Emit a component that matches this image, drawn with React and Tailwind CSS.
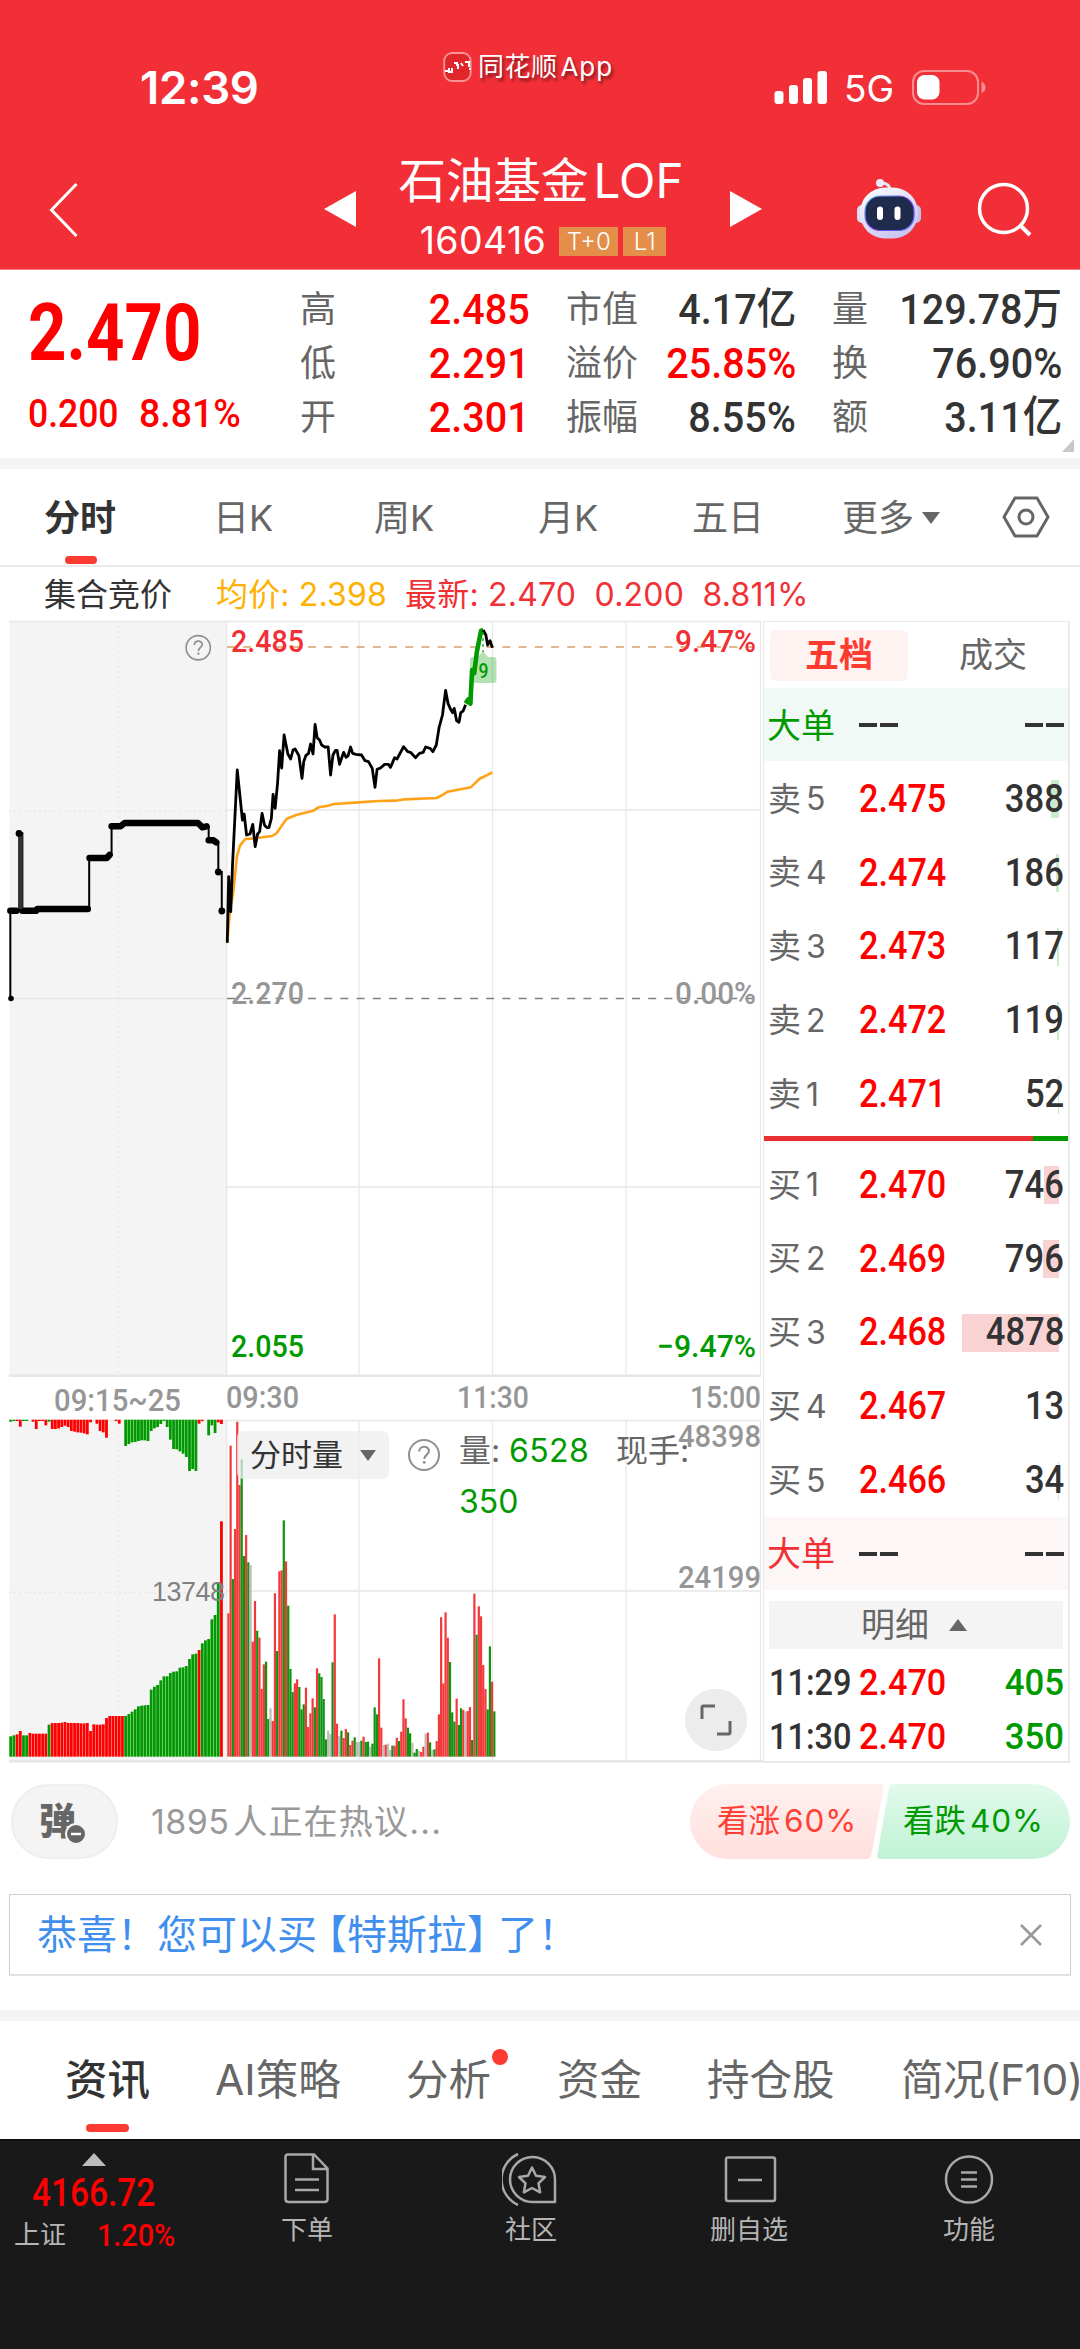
import React from "react";

const stats = [
  [
    { label: "高", value: "2.485", up: true },
    { label: "低", value: "2.291", up: true },
    { label: "开", value: "2.301", up: true },
  ],
  [
    { label: "市值", value: "4.17", unit: "亿" },
    { label: "溢价", value: "25.85%", up: true },
    { label: "振幅", value: "8.55%" },
  ],
  [
    { label: "量", value: "129.78", unit: "万" },
    { label: "换", value: "76.90%" },
    { label: "额", value: "3.11", unit: "亿" },
  ],
];

const sells = [
  { level: 5, price: "2.475", amount: 388, bar: 8 },
  { level: 4, price: "2.474", amount: 186, bar: 3 },
  { level: 3, price: "2.473", amount: 117, bar: 2 },
  { level: 2, price: "2.472", amount: 119, bar: 2 },
  { level: 1, price: "2.471", amount: 52, bar: 1 },
];

const buys = [
  { level: 1, price: "2.470", amount: 746, bar: 15 },
  { level: 2, price: "2.469", amount: 796, bar: 16 },
  { level: 3, price: "2.468", amount: 4878, bar: 97 },
  { level: 4, price: "2.467", amount: 13, bar: 0 },
  { level: 5, price: "2.466", amount: 34, bar: 1 },
];

const deals = [
  { time: "11:29", price: "2.470", amount: 405 },
  { time: "11:30", price: "2.470", amount: 350 },
];

// Series are stored in plot units, see toPoints()
const priceLine =
  "660,998 664,800 670,905 675,770 689,480 697,560 704,630 709,612 716,675 726,672 734,643 741,710 748,672 754,665 761,610 768,645 774,652 781,653 788,625 793,553 799,595 806,520 812,422 818,474 825,375 836,432 844,447 851,420 857,417 868,437 877,505 882,455 888,437 896,430 902,402 909,432 915,343 921,383 928,390 934,405 943,411 953,411 960,495 967,435 974,421 979,421 986,463 998,427 1005,442 1011,437 1018,411 1024,430 1034,433 1050,435 1060,452 1070,455 1081,475 1089,532 1095,478 1105,474 1117,463 1128,463 1134,472 1146,443 1153,447 1172,410 1184,425 1192,427 1207,443 1218,430 1229,427 1236,411 1249,415 1257,425 1267,405 1275,353 1285,315 1294,241 1301,280 1308,297 1314,308 1319,295 1326,332 1333,337 1338,308 1345,303 1352,284";
const peakLine = "1352,280 1360,268 1366,281 1371,180 1377,190 1385,125 1397,62 1403,60";
const tailLine = "1403,60 1411,75 1416,105 1423,92 1430,113";
const avgLine =
  "660,998 668,900 677,850 688,740 697,707 712,687 740,685 790,678 803,670 832,627 860,615 910,602 925,592 950,588 970,582 1040,577 1100,573 1150,572 1175,568 1268,564 1285,555 1300,545 1367,532 1392,507 1430,487";
const auctionLine =
  "30,1165 30,902 56,902 56,670 65,670 65,902 105,902 108,897 259,897 259,744 310,744 318,735 324,735 324,649 350,649 362,639 575,639 588,652 600,649 606,652 606,691 628,696 634,698 634,786 644,786 644,903";
const auctionDots = [
  "30,902 48,902",
  "65,902 105,902 108,897 255,897",
  "260,744 310,744 318,735",
  "324,649 350,649 362,639 575,639 588,652 600,649",
  "606,691 620,691 628,697",
];

const toPoints = (line) =>
  line
    .split(" ")
    .map((pair) => {
      const [x, y] = pair.split(",").map(Number);
      return `${(x / 2.904).toFixed(2)},${(610 + y / 3).toFixed(2)}`;
    })
    .join(" ");

// r = up, g = down, n = unchanged
const volumes =
  "r880 r377 g777 r627 r305 r495 g418 g708 r645 g727 n735 r965 r843 g932 r953 r1107 r1033 g1025 g1197 n1165 r1203 r820 g993 r754 r751 g601 r724 g857 g1047 g1116 r1090 r1078 g1101 g1168 g1153 r1103 r1221 r1180 r1135 g1162 r1045 g1060 g1071 g1137 g1258 n1232 n1242 g1027 r883 r1211 n1248 g1232 r1254 r1227 g1237 r1275 r1262 g1252 n1266 n1266 g1262 r1250 g1266 g1265 n1280 g1271 g1162 g1183 r1015 r1223 n1275 r1274 n1271 n1290 g1277 r1277 r1253 g1263 r1235 r1138 r1195 g1223 g1240 n1268 g1298 g1287 n1292 r1296 r1280 n1241 r1238 g1267 n1290 g1288 r1263 r1183 r892 r1090 r877 r953 g1026 g1177 g1205 r1136 g1215 g1165 r1170 n1175 r1173 r1161 g1260 r821 g944 r859 r889 r1035 r1107 g1168 g979 r1085 g1174".split(" ");

const auctionMatched =
  "g1249 g1246 r1243 r1233 g1246 g1246 r1239 r1241 r1241 r1241 r1241 r1241 g1214 r1209 r1209 r1209 r1208 r1206 r1209 r1209 r1209 r1209 r1210 r1210 r1209 r1233 r1213 r1214 r1214 r1213 r1194 r1188 r1188 r1188 r1188 r1188 g1188 g1182 g1175 g1168 g1159 g1157 g1156 g1155 g1109 g1100 g1095 g1081 g1069 g1069 g1059 g1055 g1054 g1043 g1042 g1038 g1017 g1003 g1001 r990 g970 g961 g957 g898 g885 g788 r604".split(" ");

const auctionUnmatched =
  "g305 g303 r303 r320 g303 g303 n299 r305 r327 r303 r303 r316 g305 r327 r327 r325 r321 r317 r321 r333 r335 r337 r338 r340 r343 r307 n299 r311 r333 r337 r353 n299 n299 r303 r311 n299 g378 g372 g367 g366 g363 g361 g361 g363 g333 g325 g321 g312 g303 g321 g359 g387 g388 g394 g401 g411 g453 g447 g453 r311 r303 n299 g346 g316 g339 r307 r312".split(" ");

const barColor = { r: "#ff0000", g: "#009a00", n: "#bbbbbb" };
const softColor = { r: "#f23a3c", g: "#109410", n: "#bcbcbc" };

const ChartText = ({ x, y, width, size = 31, fill = "#969696", weight = 500, children }) => (
  <text
    x={x}
    y={y}
    textLength={width}
    lengthAdjust="spacingAndGlyphs"
    fontSize={size}
    fontWeight={weight}
    fill={fill}
    className="font-['Roboto','Noto_Sans_CJK_SC',sans-serif]"
  >
    {children}
  </text>
);

const HelpIcon = ({ className }) => (
  <svg viewBox="0 0 34 34" className={className}>
    <circle cx="17" cy="17" r="15" fill="none" stroke="#8f8f8f" strokeWidth="2" />
    <path d="M12.2 13.6c0-6.4 9.8-6.2 9.8-.6 0 3.4-4.8 3.9-4.8 8" fill="none" stroke="#8f8f8f" strokeWidth="2.1" />
    <circle cx="17.2" cy="24.4" r="1.4" fill="#8f8f8f" />
  </svg>
);

const Robot = () => (
  <svg viewBox="0 0 66 62" className="h-[62px] w-[66px]">
    <defs>
      <linearGradient id="shell" x1="0" y1="0" x2="0.6" y2="1">
        <stop offset="0" stopColor="#ffffff" />
        <stop offset="1" stopColor="#c9c6f2" />
      </linearGradient>
      <linearGradient id="rim" x1="0" y1="0" x2="1" y2="1">
        <stop offset="0" stopColor="#58d6f0" />
        <stop offset="0.5" stopColor="#8a3cf0" />
        <stop offset="1" stopColor="#4f6bf5" />
      </linearGradient>
    </defs>
    <path d="M34 12c0-4-3-7-9-7" fill="none" stroke="#e6e6fb" strokeWidth="3" />
    <circle cx="24" cy="5" r="4" fill="#eceaff" />
    <rect x="1" y="27" width="10" height="18" rx="5" fill="#dcdcfa" />
    <rect x="55" y="27" width="10" height="18" rx="5" fill="#c3c0f0" />
    <rect x="4" y="9.500" width="58" height="51" rx="25" fill="url(#shell)" />
    <rect x="9" y="18" width="49" height="34.500" rx="15" fill="#1f2b4d" stroke="url(#rim)" strokeWidth="1.200" />
    <rect x="21" y="28.500" width="6" height="13.500" rx="3" fill="#fff" />
    <rect x="38.500" y="28.500" width="6" height="13.500" rx="3" fill="#fff" />
  </svg>
);

const Header = () => (
  <header className="h-[270px] border-b border-[#f77b80] bg-[#f22f37] text-white">
    <div className="flex h-[135px] items-start">
      <div className="mt-[62px] ml-[140px] w-[303px] text-[45.500px] leading-[52px] font-semibold tracking-[-0.3px]">12:39</div>
      <div className="mt-[51px] flex w-[331px] items-center">
        <svg viewBox="0 0 30 32" className="mr-[5px] h-[32px] w-[30px]">
          <rect x="1.200" y="2" width="26.500" height="28" rx="8" fill="#e0262b" stroke="#f79497" strokeWidth="1.800" />
          <path d="M2 20h3M6 17v4h3v-4M11 12h3v3M15 13v5M18 12l2 3M22 11h4v5M26 18h2" fill="none" stroke="#fff" strokeWidth="2" />
        </svg>
        <span className="text-[26px] leading-[32px] tracking-[0.5px] [text-shadow:2px_3px_3px_#0007]">
          同花顺<span className="ml-[3px] tracking-[0.9px]">App</span>
        </span>
      </div>
      <svg viewBox="0 0 54 34" className="mt-[71px] h-[34px] w-[54px]">
        <rect x="0.500" y="20" width="9" height="13" rx="3" fill="#fff" />
        <rect x="15" y="14" width="9" height="19" rx="3" fill="#fff" />
        <rect x="29" y="7" width="9" height="26" rx="3" fill="#fff" />
        <rect x="43.500" y="0" width="9.500" height="33" rx="3" fill="#fff" />
      </svg>
      <div className="mt-[68px] ml-4 w-[68px] text-[37px] leading-[42px]">5G</div>
      <svg viewBox="0 0 74 36" className="mt-[69px] h-[36px] w-[74px]">
        <rect x="1" y="2" width="65" height="33" rx="11" fill="none" stroke="#f98c90" strokeWidth="2" />
        <rect x="5" y="6" width="22.500" height="24.500" rx="7.500" fill="#fff" />
        <path d="M69.500 12.500q4 2 4 6t-4 5.500z" fill="#f98c90" />
      </svg>
    </div>
    <div className="flex h-[134px] items-start">
      <svg viewBox="0 0 30 56" className="mt-[47px] ml-[49px] h-[56px] w-[30px]">
        <path d="M27.500 2 2.500 28l25 26" fill="none" stroke="#fff" strokeWidth="3" />
      </svg>
      <svg viewBox="0 0 32 36" className="mt-[56px] ml-[245px] h-[36px] w-[32px]">
        <path d="M32 0v36L0 18z" fill="#fff" />
      </svg>
      <div className="ml-[14px] flex w-[346px] flex-col items-center">
        <h1 className="mt-[12px] -ml-[4px] text-[47.500px] leading-[68px] font-normal whitespace-nowrap">
          石油基金<span className="ml-[5px]">LOF</span>
        </h1>
        <div className="mt-[8px] flex items-center">
          <span className="mr-[13px] text-[37.500px] leading-[36px] tracking-[0.4px]">160416</span>
          <span className="mr-[5px] h-[29px] w-[59px] bg-[#e38e49] text-center text-[24px] leading-[29px] font-light">T+0</span>
          <span className="h-[29px] w-[43px] bg-[#e38e49] text-center text-[24px] leading-[29px] font-light">L1</span>
        </div>
      </div>
      <svg viewBox="0 0 32 36" className="mt-[56px] ml-[14px] h-[36px] w-[32px]">
        <path d="M0 0v36l32-18z" fill="#fff" />
      </svg>
      <div className="mt-[43px] ml-[94px]">
        <Robot />
      </div>
      <svg viewBox="0 0 56 56" className="mt-[47px] ml-[55px] h-[56px] w-[56px]">
        <circle cx="26.500" cy="26.500" r="24" fill="none" stroke="#fff" strokeWidth="3.500" />
        <path d="m43 43 10 10" stroke="#fff" strokeWidth="4" />
      </svg>
    </div>
  </header>
);

const Quote = () => (
  <section className="relative flex h-[188px] items-start">
    <div className="w-[300px] pl-7 font-['Roboto'] text-[#ff0000]">
      <div className="mt-[21px] origin-left scale-x-[0.85] text-[79px] leading-[84px] font-bold">2.470</div>
      <div className="mt-[17px] flex text-[39px] leading-[44px] font-medium">
        <span className="w-[111px] origin-left scale-x-[0.91]">0.200</span>
        <span className="origin-left scale-x-[0.96]">8.81%</span>
      </div>
    </div>
    <div className="mt-[12px] flex gap-[36px]">
      {stats.map((col, i) => (
        <div key={i} className="w-[230px]">
          {col.map((item) => (
            <div key={item.label} className="flex h-[54px] items-center justify-between text-[36px]">
              <span className="text-[#666]">{item.label}</span>
              <span
                className={
                  item.up
                    ? "origin-right scale-x-[0.92] font-['Roboto'] text-[43px] font-medium text-[#ff0000]"
                    : "origin-right scale-x-[0.92] font-['Roboto','Noto_Sans_CJK_SC'] text-[43px] font-medium whitespace-nowrap text-[#333]"
                }
              >
                {item.value}
                {item.unit}
              </span>
            </div>
          ))}
        </div>
      ))}
    </div>
    <svg viewBox="0 0 12 13" className="absolute right-[6px] bottom-[6px] h-[13px] w-[12px]">
      <path d="M12 0v13H0z" fill="#c8c8c8" />
    </svg>
  </section>
);

const PeriodTabs = () => (
  <nav className="flex h-[109px] items-center border-t-[11px] border-b-2 border-t-[#f4f4f4] border-b-[#ebebeb] text-[36px] text-[#666]">
    <div className="relative ml-[44px] w-[169px] pt-[2px] font-bold text-[#333]">
      分时
      <span className="absolute -bottom-[19px] left-[21px] h-[8px] w-[32px] rounded-[4px] bg-[#fb3b32]" />
    </div>
    <div className="w-[161px] pt-[2px]">日K</div>
    <div className="w-[164px] pt-[2px]">周K</div>
    <div className="w-[154px] pt-[2px]">月K</div>
    <div className="w-[150px] pt-[2px]">五日</div>
    <div className="flex w-[160px] items-center pt-[2px]">
      更多
      <svg viewBox="0 0 18 12" className="ml-[8px] h-[12px] w-[18px]">
        <path d="M0 0h18L9 12z" fill="#666" />
      </svg>
    </div>
    <svg viewBox="0 0 48 42" className="h-[42px] w-[48px]" fill="none" stroke="#666" strokeWidth="3">
      <path d="M13 2h22l11 19-11 19H13L2 21z" strokeLinejoin="round" />
      <circle cx="24" cy="21" r="7" />
    </svg>
  </nav>
);

const PriceChart = () => (
  <svg viewBox="9 621 754 799" className="block h-[799px] w-[754px] overflow-visible">
    <rect x="9.500" y="621" width="217.500" height="755" fill="#f4f4f4" />
    <g stroke="#e8e8e8" strokeWidth="1.300">
      <path d="M9 621.500h752M227 810h533M9 998.500h218M227 1187h533" />
      <path d="M226.700 621v755M359 621v755M492.500 621v755M626 621v755M760.500 621v755" />
      <path d="M118.500 621v755M9 811h217" strokeDasharray="2 3" />
    </g>
    <path d="M9 1375.700h752" stroke="#e6e6e6" strokeWidth="2.500" />
    <path d="M227 647h533" stroke="#d9a066" strokeWidth="1.300" strokeDasharray="8 8.200" />
    <path d="M227 998.500h533" stroke="#808080" strokeWidth="1.500" strokeDasharray="8 8.200" />
    <svg x="184.500" y="634" width="27.500" height="27.500">
      <HelpIcon />
    </svg>

    <polyline points={toPoints(auctionLine)} fill="none" stroke="#000" strokeWidth="2" />
    {auctionDots.map((line) => (
      <polyline key={line} points={toPoints(line)} fill="none" stroke="#000" strokeWidth="6.500" strokeLinecap="round" strokeLinejoin="round" />
    ))}
    <path d="M20.800 835v74" stroke="#333" strokeWidth="4" />
    <circle cx="19" cy="833.500" r="3.400" />
    <circle cx="11" cy="998.500" r="2.800" />
    <circle cx="218.300" cy="872" r="3.400" />
    <circle cx="221.800" cy="911" r="3.400" />

    <polyline points={toPoints(avgLine)} fill="none" stroke="#ffa21a" strokeWidth="2.600" strokeLinejoin="round" />
    <polyline points={toPoints(priceLine)} fill="none" stroke="#000" strokeWidth="2.800" strokeLinejoin="round" />
    <polyline points={toPoints(peakLine)} fill="none" stroke="#009a00" strokeWidth="4.600" strokeLinejoin="round" />
    <polyline points={toPoints(tailLine)} fill="none" stroke="#000" strokeWidth="2.800" strokeLinejoin="round" />
    <path d="M483 632v20" stroke="#009a00" strokeWidth="1.200" strokeDasharray="3 3" />
    <path d="M470 660q0-3 3-3h5l5-6 5 6h5.500q3 0 3 3v20q0 3-3 3H473q-3 0-3-3z" fill="#009a00" fillOpacity="0.3" />
    <ChartText x={478.5} y={678} width={10} size={20} fill="#009a00">9</ChartText>

    <ChartText x={231} y={652} width={73} fill="#f03035">2.485</ChartText>
    <ChartText x={675} y={652} width={81} fill="#f03035">9.47%</ChartText>
    <ChartText x={231} y={1004} width={73}>2.270</ChartText>
    <ChartText x={675} y={1004} width={81}>0.00%</ChartText>
    <ChartText x={231} y={1357} width={73} fill="#009a00">2.055</ChartText>
    <ChartText x={657} y={1357} width={99} fill="#009a00">−9.47%</ChartText>
    <ChartText x={54} y={1410.5} width={127}>09:15~25</ChartText>
    <ChartText x={226} y={1408} width={73}>09:30</ChartText>
    <ChartText x={457} y={1408} width={72}>11:30</ChartText>
    <ChartText x={690} y={1408} width={71}>15:00</ChartText>
  </svg>
);

const VolumeChart = () => (
  <div className="relative h-[343px]">
    <svg viewBox="9 1420 754 343" className="block h-[343px] w-[754px] overflow-visible">
      <rect x="9.500" y="1420" width="217.500" height="341" fill="#f4f4f4" />
      <g stroke="#e8e8e8" strokeWidth="1.300">
        <path d="M9 1420.500h752M227 1591h533" />
        <path d="M226.700 1420v341M359 1420v341M492.500 1420v341M626 1420v341M760.500 1420v341" />
        <path d="M118.500 1420v341M9 1592.500h217" strokeDasharray="2 3" />
      </g>
      <path d="M9 1761.300h754" stroke="#e6e6e6" strokeWidth="2.500" />
      {auctionUnmatched.map((bar, i) => (
        <rect key={i} x={9.3 + i * 3.193} y="1419.700" width="2.800" height={(bar.slice(1) - 299) / 3} fill={barColor[bar[0]]} />
      ))}
      {auctionMatched.map((bar, i) => (
        <rect key={i} x={9.3 + i * 3.193} y={1320 + bar.slice(1) / 3} width="2.800" height={(1310 - bar.slice(1)) / 3} fill={barColor[bar[0]]} />
      ))}
      {volumes.map((bar, i) => (
        <rect key={i} x={227.3 + i * 2.216} y={1320 + bar.slice(1) / 3} width="2.216" height={(1310 - bar.slice(1)) / 3} fill={softColor[bar[0]]} />
      ))}
      <text x="152" y="1601" textLength="73" fontSize="27" fill="#808080" className="font-['Liberation_Sans']">13748</text>
      <ChartText x={678} y={1447} width={83}>48398</ChartText>
      <ChartText x={678} y={1588} width={83}>24199</ChartText>
    </svg>
    <div className="absolute top-[11px] left-[228px] flex items-start">
      <button className="flex h-[48px] w-[152px] items-center rounded-[6px] bg-[#eeeeee]/75 pl-[13px] text-[31px] text-[#333]">
        分时量
        <svg viewBox="0 0 16 11" className="ml-[17px] h-[11px] w-[16px]">
          <path d="M0 0h16L8 11z" fill="#666" />
        </svg>
      </button>
      <HelpIcon className="mt-[7px] ml-[18px] h-[34px] w-[34px]" />
      <div className="ml-[18px] w-[240px] text-[32px] leading-[51px] text-[#666]">
        <div className="-mt-[6px] flex">
          <span className="w-[50px]">量:</span>
          <span className="w-[107px] tracking-[0.4px] text-[#009a00]">6528</span>
          <span className="whitespace-nowrap">现手:</span>
        </div>
        <div className="text-[#009a00]">350</div>
      </div>
    </div>
    <button className="absolute top-[269px] left-[676px] flex h-[62px] w-[62px] items-center justify-center rounded-full bg-[#ececec]">
      <svg viewBox="0 0 32 32" className="h-[32px] w-[32px]" fill="none" stroke="#666" strokeWidth="3">
        <path d="M2 15V3.500Q2 2 3.500 2H15M30 17v11.500q0 1.500-1.500 1.500H17" />
      </svg>
    </button>
  </div>
);

const BookRow = ({ side, row, color }) => (
  <div className="relative flex h-[73.8px] shrink-0 items-center pt-[3px] pr-[4px] pl-[4px]">
    <span className="w-[38px] text-[33px] text-[#666]">{side}</span>
    <span className="w-[53px] text-[32px] text-[#666]">{row.level}</span>
    <span className="origin-left scale-x-[0.9] font-['Roboto'] text-[38px] font-medium text-[#ff0000]">{row.price}</span>
    <span className={`absolute right-[9px] h-[38px] ${color}`} style={{ width: row.bar }} />
    <span className="relative ml-auto origin-right scale-x-[0.91] font-['Roboto'] text-[38px] font-medium text-[#333]">{row.amount}</span>
  </div>
);

const BigOrder = ({ className }) => (
  <div className={`flex h-[73px] shrink-0 items-center pt-[1px] pr-[4px] pl-[3px] text-[34px] ${className}`}>
    <span className="w-[92px]">大单</span>
    <span className="flex gap-[3px]">
      <i className="h-[3.5px] w-[18px] bg-[#333]" />
      <i className="h-[3.5px] w-[18px] bg-[#333]" />
    </span>
    <span className="ml-auto flex gap-[3px]">
      <i className="h-[3.5px] w-[18px] bg-[#333]" />
      <i className="h-[3.5px] w-[18px] bg-[#333]" />
    </span>
  </div>
);

const OrderBook = () => (
  <aside className="flex h-[1142px] w-[307px] flex-col border-t-[1.5px] border-r-2 border-b-[2.5px] border-l border-[#e9e9e9]">
    <div className="flex h-[66px] shrink-0 items-center pl-[6px] text-[34px]">
      <div className="h-[51px] w-[138px] rounded-[6px] bg-[#fff3f2] text-center leading-[49px] font-bold text-[#ff3b30]">五档</div>
      <div className="-mt-[2px] ml-[51px] text-[#666]">成交</div>
    </div>
    <BigOrder className="bg-[#f0f9f6] text-[#009a00]" />
    {sells.map((row) => (
      <BookRow key={row.level} side="卖" row={row} color="bg-[#c9ebc9]" />
    ))}
    <div className="mt-[6px] mb-[6px] flex h-[5px] shrink-0 bg-[#e93030]">
      <div className="ml-auto w-[35px] bg-[#009a00]" />
    </div>
    {buys.map((row) => (
      <BookRow key={row.level} side="买" row={row} color="bg-[#f9d3d3]" />
    ))}
    <BigOrder className="mt-[1px] bg-[#fdf6f6] text-[#f03035]" />
    <div className="mx-[5px] mt-[11px] mb-[5px] flex h-[48px] shrink-0 items-center justify-center bg-[#f4f4f4] text-[34px] text-[#666]">
      明细
      <svg viewBox="0 0 18 12" className="mr-[4px] ml-[20px] h-[12px] w-[18px]">
        <path d="M9 0l9 12H0z" fill="#666" />
      </svg>
    </div>
    {deals.map((deal) => (
      <div key={deal.time} className="flex h-[54px] shrink-0 items-center pt-[4px] pr-[4px] pl-[5px] font-['Roboto'] text-[37px] leading-[48px] font-medium">
        <span className="w-[90px] origin-left scale-x-[0.88] text-[#333]">{deal.time}</span>
        <span className="origin-left scale-x-[0.925] text-[#ff0000]">{deal.price}</span>
        <span className="ml-auto origin-right scale-x-[0.94] text-[#009a00]">{deal.amount}</span>
      </div>
    ))}
  </aside>
);

const Discussion = () => (
  <section className="flex h-[131px] items-start pt-[21px]">
    <button className="relative ml-[11px] flex h-[75px] w-[107px] items-center rounded-full border-2 border-[#eee] bg-[#f4f4f4] pl-[26px] text-[37px] font-black text-[#666]">
      弹
      <svg viewBox="0 0 22 22" className="absolute top-[37px] left-[52px] h-[22px] w-[22px]">
        <circle cx="11" cy="11" r="10" fill="#666" stroke="#f4f4f4" strokeWidth="2" />
        <path d="M6 11h10" stroke="#fff" strokeWidth="2.500" />
      </svg>
    </button>
    <div className="ml-[33px] flex w-[539px] text-[34px] leading-[75px] tracking-[1.2px] text-[#999]">
      <span className="mr-[4px] tracking-[0.4px]">1895</span>人正在热议...
    </div>
    <div className="relative h-[75px] w-[380px]">
      <svg viewBox="0 0 380 75" className="absolute inset-0">
        <defs>
          <linearGradient id="rise" x1="0" y1="0" x2="0" y2="1">
            <stop offset="0" stopColor="#fff0ef" />
            <stop offset="1" stopColor="#ffe0de" />
          </linearGradient>
          <linearGradient id="fall" x1="0" y1="0" x2="0" y2="1">
            <stop offset="0" stopColor="#e2faec" />
            <stop offset="1" stopColor="#c0f2d5" />
          </linearGradient>
        </defs>
        <path d="M37.500 0H190q4 0 3.500 4l-12 66q-1 5-5 5H37.500a37.500 37.500 0 0 1 0-75z" fill="url(#rise)" />
        <path d="M342.500 0H204q-4 0-5 4l-11.500 66q-1 5 3 5h152a37.500 37.500 0 0 0 0-75z" fill="url(#fall)" />
      </svg>
      <div className="relative flex text-[31.5px] leading-[74px] whitespace-nowrap">
        <span className="ml-[27px] w-[186px] text-[#ff4034]">看涨<span className="ml-[4px] tracking-[0.9px]">60%</span></span>
        <span className="text-[#009a00]">看跌<span className="ml-[4px] tracking-[0.9px]">40%</span></span>
      </div>
    </div>
  </section>
);

const Notice = () => (
  <div className="mx-[9px] flex h-[82px] items-center justify-between border border-b-2 border-[#cfcfcf] border-b-[#e2e2e2] pr-[28px] pl-[27px]">
    <div className="text-[40px] whitespace-nowrap text-[#408fee]">
      恭喜！您可以<span className="tracking-[-10px]">买</span>【特斯拉<span className="tracking-[-9px]">】</span>了！
    </div>
    <svg viewBox="0 0 22 22" className="h-[22px] w-[22px]">
      <path d="m1 1 20 20M21 1 1 21" stroke="#999" strokeWidth="2.600" />
    </svg>
  </div>
);

const InfoTabs = () => (
  <nav className="mt-[34px] flex h-[129px] items-center overflow-hidden border-t-[11px] border-[#f4f4f4] text-[42.5px] whitespace-nowrap text-[#666]">
    <div className="relative ml-[65px] w-[150px] shrink-0 font-medium text-[#333]">
      资讯
      <span className="absolute -bottom-[20px] left-[21px] h-[8px] w-[43px] rounded-[4px] bg-[#fb3b32]" />
    </div>
    <div className="w-[191px] shrink-0">AI策略</div>
    <div className="relative w-[151px] shrink-0">
      分析
      <span className="absolute top-[1px] left-[86px] h-[16px] w-[16px] rounded-full bg-[#fb3b32]" />
    </div>
    <div className="w-[150px] shrink-0">资金</div>
    <div className="w-[194px] shrink-0">持仓股</div>
    <div className="shrink-0 tracking-[-0.5px]">简况(F10)</div>
  </nav>
);

const FooterItem = ({ label, className, children }) => (
  <div className={`flex flex-col items-center ${className}`}>
    <svg viewBox="0 0 58 58" className="h-[58px] w-[58px]" fill="none" stroke="#a8a8a8" strokeWidth="2.500">
      {children}
    </svg>
    <span className="mt-[4px] leading-[36px]">{label}</span>
  </div>
);

const Footer = () => (
  <footer className="flex flex-1 items-start border-t-2 border-[#101010] bg-[#191919] text-[26px] text-[#b5b5b5]">
    <div className="w-[188px] pt-[12px]">
      <svg viewBox="0 0 24 13" className="ml-[82px] h-[13px] w-[24px]">
        <path d="M12 0l12 13H0z" fill="#bdbdbd" />
      </svg>
      <div className="mt-[5px] ml-[32px] origin-left scale-x-[0.88] font-['Roboto'] text-[38px] leading-[44px] font-medium text-[#ff0000]">4166.72</div>
      <div className="mt-[2px] ml-[14px] flex items-center leading-[36px]">
        <span className="w-[83px]">上证</span>
        <span className="origin-left scale-x-[0.9] font-['Roboto'] text-[32px] font-medium text-[#ff0000]">1.20%</span>
      </div>
    </div>
    <FooterItem label="下单" className="mt-[9px] ml-[74px] w-[90px]">
      <path d="M9 4.500h27l13.500 14V49q0 3-3 3h-36q-3 0-3-3V7q0-2.500 2.500-2.500zM35 5v14h14M17 29.500h24M17 40h24" />
    </FooterItem>
    <FooterItem label="社区" className="mt-[9px] ml-[134px] w-[90px]">
      <path d="M53 52H30.500A22.500 22.500 0 1 1 53 30z" strokeLinejoin="round" />
      <path d="M16 4A28 28 0 0 0 16 55" />
      <path d="m30 17.500 4 8.300 9 1.200-6.500 6.300 1.600 9-8.100-4.300-8.100 4.300 1.600-9L17 27l9-1.200z" strokeLinejoin="round" />
    </FooterItem>
    <FooterItem label="删自选" className="mt-[9px] ml-[128px] w-[90px]">
      <rect x="6" y="7.500" width="49" height="43.500" rx="2" />
      <path d="M18 30h24" />
    </FooterItem>
    <FooterItem label="功能" className="mt-[9px] ml-[130px] w-[90px]">
      <circle cx="29" cy="29.500" r="23" />
      <path d="M21 22.500h16M21 29.500h16M21 36.500h16" />
    </FooterItem>
  </footer>
);

const App = () => {
  return (
    <div className="flex h-[2349px] w-[1080px] flex-col overflow-hidden bg-white font-['Inter','Noto_Sans_CJK_SC',sans-serif]">
      <Header />
      <Quote />
      <PeriodTabs />
      <div className="flex h-[54px] items-center pt-[2px] pl-[44px] text-[32px] whitespace-nowrap">
        <span className="w-[172px] text-[#333]">集合竞价</span>
        <span className="w-[189px] tracking-[0.15px] text-[#ffb000]">均价: 2.398</span>
        <span className="tracking-[0.2px] text-[#f03035]">最新: 2.470&nbsp; 0.200&nbsp; 8.811%</span>
      </div>
      <main className="flex h-[1142px] pl-[9px]">
        <div className="w-[754px]">
          <PriceChart />
          <VolumeChart />
        </div>
        <OrderBook />
      </main>
      <Discussion />
      <Notice />
      <InfoTabs />
      <Footer />
    </div>
  );
};

export default App;
